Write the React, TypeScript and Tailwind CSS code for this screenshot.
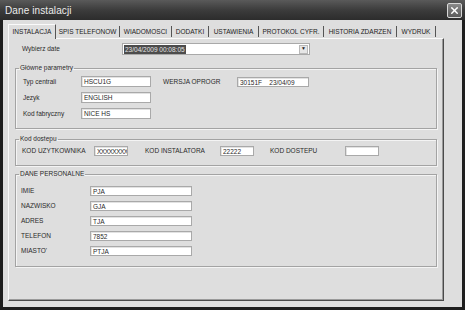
import { X } from "lucide-react";

const font = "font-['Liberation_Sans',Arial,sans-serif]";

const tabs = [
  { label: "INSTALACJA", w: "w-[48px]" },
  { label: "SPIS TELEFONOW", w: "w-[64px]" },
  { label: "WIADOMOSCI", w: "w-[52px]" },
  { label: "DODATKI", w: "w-[37px]" },
  { label: "USTAWIENIA", w: "w-[50px]" },
  { label: "PROTOKOL CYFR.", w: "w-[65px]" },
  { label: "HISTORIA ZDARZEN", w: "w-[73px]" },
  { label: "WYDRUK", w: "w-[39px]" },
];

const Field = ({ value, className }: { value: string; className: string }) => (
  <div
    className={`bg-white border border-[#a9a9a9] shadow-[inset_1px_1px_0_#e2e2e2] pl-[2px] text-[6.5px] leading-[9px] text-[#2a2a2a] whitespace-pre overflow-hidden ${className}`}
  >
    {value}
  </div>
);

const Group = ({ title, className, children }: { title: string; className: string; children: React.ReactNode }) => (
  <fieldset className={`mx-[6px] shrink-0 border border-[#a3a3a3] shadow-[inset_1px_1px_0_#f4f4f4,1px_1px_0_#f4f4f4] ${className}`}>
    <legend className="ml-[3px] px-[1px] text-[6.5px] leading-[8px] text-[#2a2a2a]">{title}</legend>
    {children}
  </fieldset>
);

const personal = [
  ["IMIE", "PJA"],
  ["NAZWISKO", "GJA"],
  ["ADRES", "TJA"],
  ["TELEFON", "7852"],
  ["MIASTO'", "PTJA"],
];

export default function App() {
  return (
    <div className={`${font} w-[465px] h-[310px] bg-[#1e1e1e] flex flex-col overflow-hidden`}>
      {/* title bar */}
      <div className="h-[20px] shrink-0 flex items-center justify-between pl-[5px] pr-[3px] bg-gradient-to-b from-[#5a5a5a] via-[#3c3c3c] to-[#2c2c2c]">
        <span className="text-[10px] text-[#ececec] tracking-[0.1px]">Dane instalacji</span>
        <div className="w-[15px] h-[15px] flex items-center justify-center border border-[#d8d8d8] rounded-[2px] bg-gradient-to-b from-[#8a8a8a] to-[#5a5a5a]">
          <X size={11} strokeWidth={3} className="text-white" />
        </div>
      </div>

      {/* body */}
      <div className="flex-1 ml-[3px] mr-[3px] mb-[3px] bg-[#dedede] pl-[5px] pr-[18px] pt-[3px] pb-[6px] flex flex-col">
        {/* tabs */}
        <div className="h-[15px] shrink-0 flex items-end text-[6.5px] text-[#222]">
          {tabs.map((t, i) => (
            <div
              key={t.label}
              className={`${t.w} shrink-0 whitespace-nowrap text-center ${
                i === 0
                  ? "h-[15px] leading-[14px] border-t border-l border-[#fafafa] border-r border-r-[#555] bg-[#dedede] relative z-10 -mb-[1px]"
                  : "h-[11px] leading-[11px] mb-[1px] border-r border-[#555]"
              }`}
            >
              {t.label}
            </div>
          ))}
        </div>

        {/* panel */}
        <div className="flex-1 border-t border-l border-[#fafafa] border-r border-b border-r-[#4a4a4a] border-b-[#4a4a4a] shadow-[inset_-1px_-1px_0_#9a9a9a] flex flex-col text-[#2a2a2a]">
          <div className="flex items-center mt-[4px] h-[12px] shrink-0">
            <span className="ml-[13px] w-[100px] text-[6.5px]">Wybierz date</span>
            <div className="w-[188px] h-[12px] bg-white border border-[#a9a9a9] flex items-center pl-[1px] pr-[1px]">
              <span className="bg-[#4c4c4c] text-[#e4e4e4] text-[6.5px] leading-[9px] px-[1px]">23/04/2009 00:08:05</span>
              <div className="ml-auto w-[9px] h-[9px] bg-[#e6e6e6] border border-[#b8b8b8] flex items-center justify-center text-[5px] text-[#222]">
                ▼
              </div>
            </div>
          </div>

          <Group title="Główne parametry" className="mt-[9px] h-[65px] pt-[4px]">
            <div className="flex">
              <div className="flex flex-col gap-[5px] text-[6.5px]">
                {[
                  ["Typ centrali", "HSCU1G"],
                  ["Jezyk", "ENGLISH"],
                  ["Kod fabryczny", "NICE HS"],
                ].map(([l, v]) => (
                  <div key={l} className="flex items-center h-[11px]">
                    <span className="ml-[7px] w-[58px]">{l}</span>
                    <Field value={v} className="w-[70px] h-[11px]" />
                  </div>
                ))}
              </div>
              <div className="flex items-start h-[11px] text-[6.5px]">
                <span className="ml-[12px] w-[74px] leading-[11px]">WERSJA OPROGR</span>
                <Field value={"30151F    23/04/09"} className="w-[72px] h-[10px] mt-[1px]" />
              </div>
            </div>
          </Group>

          <Group title="Kod dostepu" className="mt-[6px] h-[31px] pt-[3px]">
            <div className="flex items-center h-[10px] text-[6.5px]">
              <span className="ml-[6px] w-[72px]">KOD UZYTKOWNIKA</span>
              <Field value="XXXXXXXX" className="w-[34px] h-[10px] tracking-[-0.5px]" />
              <span className="ml-[17px] w-[75px]">KOD INSTALATORA</span>
              <Field value="22222" className="w-[34px] h-[10px]" />
              <span className="ml-[16px] w-[75px]">KOD DOSTEPU</span>
              <Field value="" className="w-[34px] h-[10px]" />
            </div>
          </Group>

          <Group title="DANE PERSONALNE" className="mt-[4px] h-[97px] pt-[8px]">
            <div className="flex flex-col gap-[5px] text-[6.5px]">
              {personal.map(([l, v]) => (
                <div key={l} className="flex items-center h-[10px]">
                  <span className="ml-[5px] w-[69px]">{l}</span>
                  <Field value={v} className="w-[102px] h-[10px]" />
                </div>
              ))}
            </div>
          </Group>
        </div>
      </div>
    </div>
  );
}
